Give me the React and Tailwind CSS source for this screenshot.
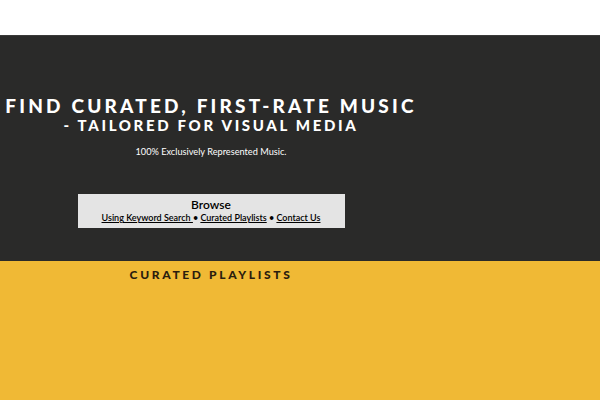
export default function App() {
  return (
    <div className="w-[600px] h-[400px] bg-white flex flex-col overflow-hidden" style={{ fontFamily: "Lato, 'Open Sans', sans-serif" }}>
      <div className="h-[35px] bg-white" />
      <div className="h-[226px] bg-[#2a2a29] border-t border-[#3a3a39] flex">
        <div className="w-[422px] flex flex-col items-center">
          <div className="mt-[60px] text-white font-black text-[19px] leading-[19px] tracking-[0.168em] whitespace-nowrap">FIND CURATED, FIRST-RATE MUSIC</div>
          <div className="mt-[1px] text-white font-black text-[15px] leading-[18px] tracking-[0.177em] whitespace-nowrap">- TAILORED FOR VISUAL MEDIA</div>
          <div className="mt-[12px] text-white text-[9.2px] leading-[11px]">100% Exclusively Represented Music.</div>
          <div className="mt-[37px] w-[267px] h-[34px] bg-[#e4e4e4] flex flex-col items-center pt-[3px]">
            <div className="text-[12px] leading-[15px] text-black font-semibold">Browse</div>
            <div className="text-[9px] leading-[12px] text-black font-semibold whitespace-nowrap">
              <span className="underline">Using Keyword Search </span> • <span className="underline">Curated Playlists</span> • <span className="underline">Contact Us</span>
            </div>
          </div>
        </div>
        <div className="flex-1" />
      </div>
      <div className="flex-1 bg-[#f0b935] flex">
        <div className="w-[422px] flex flex-col items-center">
          <div className="mt-[7px] text-[#2b1d0e] font-black text-[12px] leading-[14px] tracking-[0.22em] whitespace-nowrap">CURATED PLAYLISTS</div>
        </div>
      </div>
    </div>
  );
}
